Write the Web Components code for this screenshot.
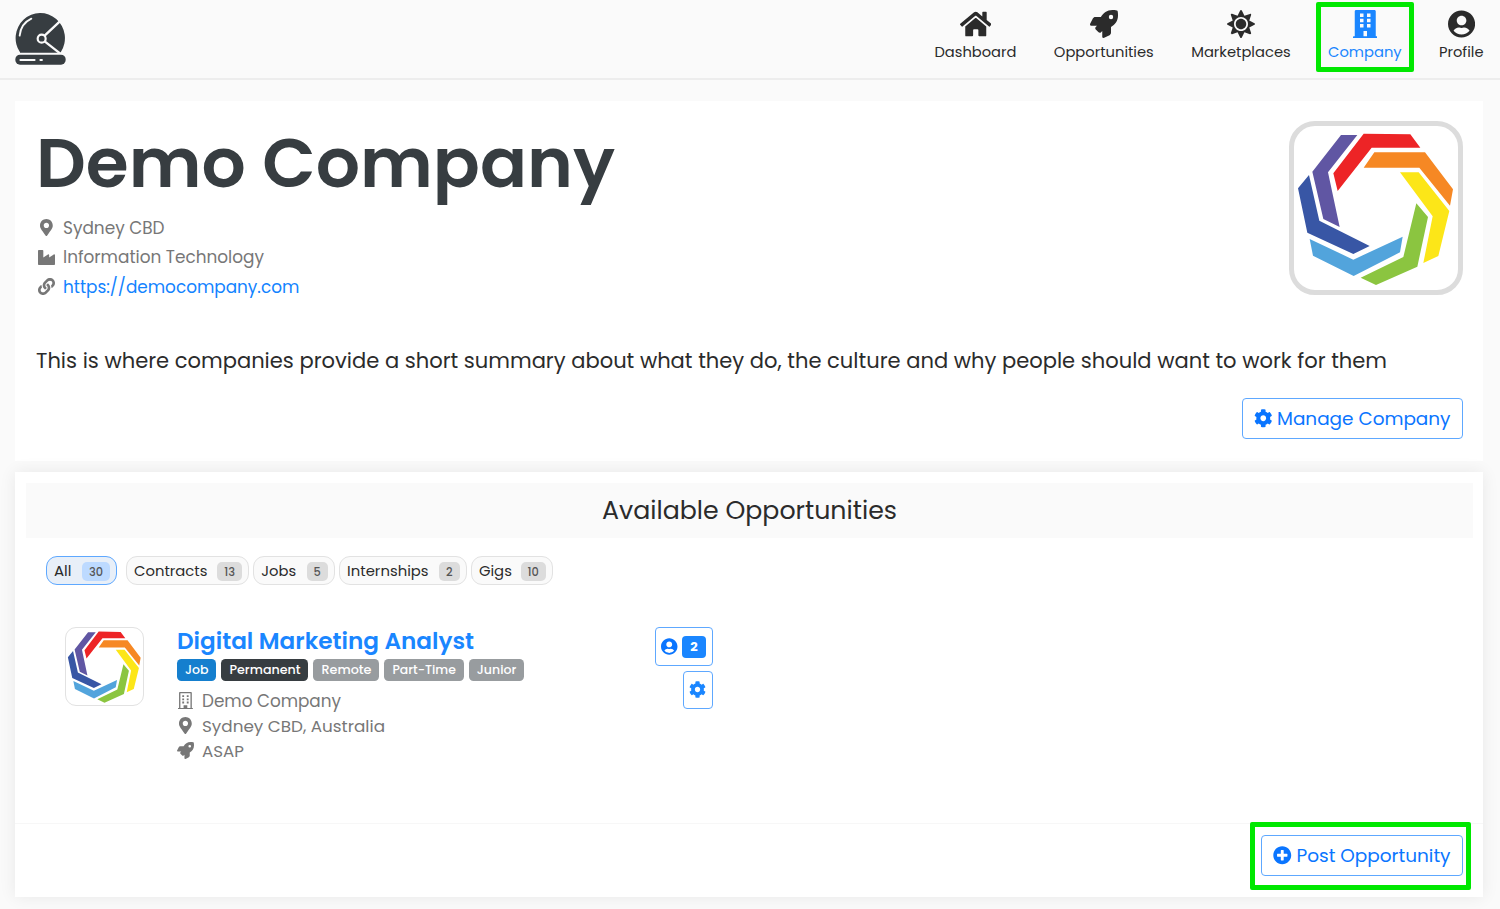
<!DOCTYPE html>
<html lang="en">
<head>
<meta charset="utf-8">
<title>Demo Company</title>
<style>
    body {
        margin: 0;
        height: 909px;
        overflow: hidden;
        background: #fafafa;
        color: #2b2b2b;
        font-family: Poppins, Inter, "Open Sans", sans-serif;
    }
</style>
</head>
<body>
<company-page></company-page>

<script>
const ICONS = {
    home: ["0 0 576 512", "M280.37 148.26L96 300.11V464a16 16 0 0 0 16 16l112.06-.29a16 16 0 0 0 15.92-16V368a16 16 0 0 1 16-16h64a16 16 0 0 1 16 16v95.64a16 16 0 0 0 16 16.05L464 480a16 16 0 0 0 16-16V300L295.67 148.26a12.19 12.19 0 0 0-15.3 0zM571.6 251.47L488 182.56V44.05a12 12 0 0 0-12-12h-56a12 12 0 0 0-12 12v72.61L318.47 43a48 48 0 0 0-61 0L4.34 251.47a12 12 0 0 0-1.6 16.9l25.5 31A12 12 0 0 0 45.15 301l235.22-193.74a12.19 12.19 0 0 1 15.3 0L530.9 301a12 12 0 0 0 16.9-1.6l25.5-31a12 12 0 0 0-1.7-16.93z"],
    rocket: ["0 0 512 512", "M505.12 19.09c-1.19-5.53-6.66-11-12.21-12.18C460.72 0 435.51 0 410.41 0 307.18 0 245.27 55.2 199.05 128H94.84c-16.35 0-35.56 11.87-42.89 26.48L2.52 253.3A28.4 28.4 0 0 0 0 264a24 24 0 0 0 24 24h103.82l-22.48 22.47c-11.36 11.36-13 32.26 0 45.25l50.91 50.9c11.15 11.19 32.15 13.16 45.27 0L224 384.16V488a24 24 0 0 0 24 24 28.56 28.56 0 0 0 10.71-2.52l98.73-49.39c14.63-7.3 26.51-26.5 26.51-42.86V312.8C456.55 266.49 512 204.39 512 101.7c.08-25.2.08-50.4-6.88-82.61ZM384.04 168A40 40 0 1 1 424.05 128 40 40 0 0 1 384.04 168Z"],
    sun: ["0 0 512 512", "M256 160c-52.9 0-96 43.1-96 96s43.1 96 96 96 96-43.1 96-96-43.1-96-96-96zm246.4 80.5l-94.7-47.3 33.5-100.4c4.5-13.6-8.4-26.5-21.9-21.9l-100.4 33.5-47.4-94.8c-6.4-12.8-24.6-12.8-31 0l-47.3 94.7L92.7 70.8c-13.6-4.5-26.5 8.4-21.9 21.9l33.5 100.4-94.7 47.4c-12.8 6.4-12.8 24.6 0 31l94.7 47.3-33.5 100.5c-4.5 13.6 8.4 26.5 21.9 21.9l100.4-33.5 47.3 94.7c6.4 12.8 24.6 12.8 31 0l47.3-94.7 100.4 33.5c13.6 4.5 26.5-8.4 21.9-21.9l-33.5-100.4 94.7-47.3c13-6.5 13-24.7.2-31.1zm-155.9 106c-49.9 49.9-131.1 49.9-181 0-49.9-49.9-49.9-131.1 0-181 49.9-49.9 131.1-49.9 181 0 49.9 49.9 49.9 131.1 0 181z"],
    building: ["0 0 448 512", "M436 480h-20V24c0-13-11-24-24-24H56C43 0 32 11 32 24v456H12c-7 0-12 5-12 12v20h448v-20c0-7-5-12-12-12zM128 64h64v64h-64zM256 64h64v64h-64zM128 160h64v64h-64zM256 160h64v64h-64zM128 256h64v64h-64zM256 256h64v64h-64zM192 384h64v96h-64z"],
    "building-outline": ["0 0 448 512", "M436 480h-20V24c0-13-11-24-24-24H56C43 0 32 11 32 24v456H12c-7 0-12 5-12 12v20h448v-20c0-7-5-12-12-12zM72 40h304v440h-96v-84h-112v84H72zM128 96v56h56V96zM264 96v56h56V96zM128 192v56h56v-56zM264 192v56h56v-56zM128 288v56h56v-56zM264 288v56h56v-56z"],
    user: ["0 0 496 512", "M248 8C111 8 0 119 0 256s111 248 248 248 248-111 248-248S385 8 248 8zm0 96c48.6 0 88 39.4 88 88s-39.4 88-88 88-88-39.4-88-88 39.4-88 88-88zm0 344c-58.7 0-111.3-26.6-146.5-68.2 18.8-35.4 55.6-59.8 98.5-59.8 2.4 0 4.8.4 7.1 1.1 13 4.2 26.6 6.9 40.9 6.9 14.3 0 28-2.7 40.9-6.9 2.3-.7 4.7-1.1 7.1-1.1 42.9 0 79.7 24.4 98.5 59.8C359.3 421.4 306.7 448 248 448z"],
    pin: ["0 0 384 512", "M172.268 501.67C26.97 291.031 0 269.413 0 192 0 85.961 85.961 0 192 0s192 85.961 192 192c0 77.413-26.97 99.031-172.268 309.67-9.535 13.774-29.93 13.773-39.464 0zM192 272c44.183 0 80-35.817 80-80s-35.817-80-80-80-80 35.817-80 80 35.817 80 80 80z"],
    industry: ["0 0 512 512", "M475.115 163.781L336 252.309v-68.28c0-18.916-20.931-30.399-36.885-20.248L160 252.309V56c0-13.255-10.745-24-24-24H24C10.745 32 0 42.745 0 56v400c0 13.255 10.745 24 24 24h464c13.255 0 24-10.745 24-24V184.029c0-18.917-20.931-30.399-36.885-20.248z"],
    link: ["0 0 512 512", "M326.612 185.391c59.747 59.809 58.927 155.698.36 214.59-.11.12-.24.25-.36.37l-67.2 67.2c-59.27 59.27-155.699 59.262-214.96 0-59.27-59.26-59.27-155.7 0-214.96l37.106-37.106c9.84-9.84 26.786-3.3 27.294 10.606.648 17.722 3.826 35.527 9.69 52.721 1.986 5.822.567 12.262-3.783 16.612l-13.087 13.087c-28.026 28.026-28.905 73.66-1.155 101.96 28.024 28.579 74.086 28.749 102.325.51l67.2-67.19c28.191-28.191 28.073-73.757 0-101.83-3.701-3.694-7.429-6.564-10.341-8.569a16.037 16.037 0 0 1-6.947-12.606c-.396-10.567 3.348-21.456 11.698-29.806l21.054-21.055c5.521-5.521 14.182-6.199 20.584-1.731a152.482 152.482 0 0 1 20.522 17.197zM467.547 44.449c-59.261-59.262-155.69-59.27-214.96 0l-67.2 67.2c-.12.12-.25.25-.36.37-58.566 58.892-59.387 154.781.36 214.59a152.454 152.454 0 0 0 20.521 17.196c6.402 4.468 15.064 3.789 20.584-1.731l21.054-21.055c8.35-8.35 12.094-19.239 11.698-29.806a16.037 16.037 0 0 0-6.947-12.606c-2.912-2.005-6.64-4.875-10.341-8.569-28.073-28.073-28.191-73.639 0-101.83l67.2-67.19c28.239-28.239 74.3-28.069 102.325.51 27.75 28.3 26.872 73.934-1.155 101.96l-13.087 13.087c-4.35 4.35-5.769 10.79-3.783 16.612 5.864 17.194 9.042 34.999 9.69 52.721.509 13.906 17.454 20.446 27.294 10.606l37.106-37.106c59.271-59.259 59.271-155.699.001-214.959z"],
    cog: ["0 0 512 512", "M487.4 315.7l-42.6-24.6c4.3-23.2 4.3-47 0-70.2l42.6-24.6c4.9-2.8 7.1-8.6 5.5-14-11.1-35.6-30-67.8-54.7-94.6-3.8-4.1-10-5.1-14.8-2.3L380.8 110c-17.9-15.4-38.5-27.3-60.8-35.1V25.8c0-5.6-3.9-10.5-9.4-11.7-36.7-8.2-74.3-7.8-109.2 0-5.5 1.2-9.4 6.1-9.4 11.7V75c-22.2 7.9-42.8 19.8-60.8 35.1L88.7 85.5c-4.9-2.8-11-1.9-14.8 2.3-24.7 26.7-43.6 58.9-54.7 94.6-1.7 5.4.6 11.2 5.5 14L67.3 221c-4.3 23.2-4.3 47 0 70.2l-42.6 24.6c-4.9 2.8-7.1 8.6-5.5 14 11.1 35.6 30 67.8 54.7 94.6 3.8 4.1 10 5.1 14.8 2.3l42.6-24.6c17.9 15.4 38.5 27.3 60.8 35.1v49.2c0 5.6 3.9 10.5 9.4 11.7 36.7 8.2 74.3 7.8 109.2 0 5.5-1.2 9.4-6.1 9.4-11.7v-49.2c22.2-7.9 42.8-19.8 60.8-35.1l42.6 24.6c4.9 2.8 11 1.9 14.8-2.3 24.7-26.7 43.6-58.9 54.7-94.6 1.5-5.5-.7-11.3-5.6-14.1zM256 336c-44.1 0-80-35.9-80-80s35.9-80 80-80 80 35.9 80 80-35.9 80-80 80z"],
    plus: ["0 0 512 512", "M256 8C119 8 8 119 8 256s111 248 248 248 248-111 248-248S393 8 256 8zm144 276c0 6.6-5.4 12-12 12h-92v92c0 6.6-5.4 12-12 12h-56c-6.6 0-12-5.4-12-12v-92h-92c-6.6 0-12-5.4-12-12v-56c0-6.6 5.4-12 12-12h92v-92c0-6.6 5.4-12 12-12h56c6.6 0 12 5.4 12 12v92h92c6.6 0 12 5.4 12 12v56z"],
};

class AppIcon extends HTMLElement {
    constructor() {
        super();
        this.attachShadow({ mode: "open" });
    }

    connectedCallback() {
        const [viewBox, path] = ICONS[this.getAttribute("name")];
        const size = this.getAttribute("size") || 18;
        this.shadowRoot.innerHTML = `
            <style>
                :host { display: inline-flex; justify-content: center; flex: none; }
                svg { display: block; fill: currentColor; height: ${size}px; }
            </style>
            <svg viewBox="${viewBox}"><path fill-rule="evenodd" d="${path}"/></svg>
        `;
    }
}

// One line of text, sized so that it fills the given measure in pixels
class FitText extends HTMLElement {
    constructor() {
        super();
        this.attachShadow({ mode: "open" }).innerHTML = `
            <style>
                :host { display: inline-block; white-space: nowrap; flex: none; }
            </style>
            <slot></slot>
        `;
    }

    connectedCallback() {
        const measure = Number(this.getAttribute("measure"));
        const count = this.textContent.length;
        if (!measure || count < 2) return;
        const size = parseFloat(getComputedStyle(this).fontSize);
        this.style.fontSize = `${(size * measure) / this.#width}px`;

        // hinting can leave a small remainder, spread it over the letters
        const tracking = (measure - this.#width) / (count - 1);
        this.style.letterSpacing = `${tracking}px`;
        this.style.marginRight = `${-tracking}px`;
    }

    get #width() {
        return this.getBoundingClientRect().width;
    }
}

class HelmetLogo extends HTMLElement {
    constructor() {
        super();
        this.attachShadow({ mode: "open" }).innerHTML = `
            <style>
                :host { display: block; }
                svg { display: block; width: 51px; height: 53px; }
            </style>
            <svg viewBox="45 36 153 159" fill="none" stroke="#fafafa" stroke-linecap="round">
                <path fill="#373d41" stroke="none" d="M60 157A74 75 0 1 1 183 155L180 158H60Z"/>
                <path stroke-width="7" stroke-linecap="butt" d="M134 107L186 58M134 124L180 160"/>
                <circle cx="125" cy="116" r="12" stroke-width="6.5" fill="#373d41"/>
                <path stroke-width="5.5" d="M59 107C61 84 73 66 94 56"/>
                <rect x="46" y="164" width="151" height="30" rx="14" fill="#373d41" stroke="none"/>
                <path stroke-width="5.5" d="M61 180H104M121 180H126"/>
            </svg>
        `;
    }
}

class CompanyLogo extends HTMLElement {
    constructor() {
        super();
        this.attachShadow({ mode: "open" }).innerHTML = `
            <style>
                :host { display: block; box-sizing: border-box; background: #fff; flex: none; }
                svg { display: block; width: 100%; height: 100%; }
            </style>
            <svg viewBox="42 48 492 492">
                <path fill="#6056a3" d="M183 75H232L144 187L179 351L130 327L97 185Z"/>
                <path fill="#ed2426" d="M251 71L391 73L421 113H275L173 243L160 190Z"/>
                <path fill="#f68824" d="M283 127H435L519 238L510 287L418 173H251Z"/>
                <path fill="#fce618" d="M360 187H416L508 303L475 438L430 459L458 319Z"/>
                <path fill="#8bc540" d="M409 280L444 321L412 470L288 525L242 503L370 441Z"/>
                <path fill="#52a4dc" d="M89 387L220 449L368 380L360 427L221 498L99 437Z"/>
                <path fill="#3856a5" d="M87 195L118 332L269 408L220 432L82 368L54 235Z"/>
            </svg>
        `;
    }
}

class NavItem extends HTMLElement {
    constructor() {
        super();
        this.attachShadow({ mode: "open" }).innerHTML = `
            <style>
                :host {
                    display: flex;
                    flex-direction: column;
                    align-items: center;
                    position: relative;
                    font-size: 14.4px;
                    line-height: 22px;
                    gap: 3px;
                }
                :host([active]) { color: #1a86ff; }
                :host([active])::after {
                    content: "";
                    position: absolute;
                    box-sizing: border-box;
                    inset: -8px -12px -9px;
                    border: 5px solid #00e800;
                    border-radius: 2px;
                }
            </style>
            <app-icon size="28" name="${this.getAttribute("icon")}"></app-icon>
            <slot></slot>
        `;
    }
}

class OutlineButton extends HTMLElement {
    constructor() {
        super();
        this.attachShadow({ mode: "open" }).innerHTML = `
            <style>
                :host {
                    display: inline-flex;
                    align-items: center;
                    justify-content: center;
                    box-sizing: border-box;
                    border: 1px solid #5ea8ff;
                    border-radius: 4px;
                    background: #fff;
                    color: #0a75ff;
                    font-size: 18.8px;
                    height: 41px;
                    padding: 0 11px;
                    gap: 5px;
                    cursor: pointer;
                }
            </style>
            <slot></slot>
        `;
    }
}

class FilterChip extends HTMLElement {
    constructor() {
        super();
        this.attachShadow({ mode: "open" }).innerHTML = `
            <style>
                :host {
                    display: flex;
                    align-items: center;
                    justify-content: space-between;
                    box-sizing: border-box;
                    height: 29px;
                    padding: 0 6px 0 7px;
                    border: 1px solid #e2e2e2;
                    border-radius: 11px;
                    background: #fafafa;
                    font-size: 14.3px;
                }
                .count {
                    box-sizing: border-box;
                    height: 19px;
                    padding: 0 7px;
                    margin-top: 1px;
                    border-radius: 5px;
                    background: #dcdcdc;
                    color: #555;
                    font-size: 11.4px;
                    font-weight: 500;
                    line-height: 20px;
                }
                :host([selected]) { background: #e8eff8; border-color: #5ea8ff; }
                :host([selected]) .count { background: #bddaff; }
            </style>
            <slot></slot>
            <span class="count">${this.getAttribute("count")}</span>
        `;
    }
}

class TagBadge extends HTMLElement {
    constructor() {
        super();
        this.attachShadow({ mode: "open" }).innerHTML = `
            <style>
                :host {
                    display: block;
                    padding: 0 8px;
                    height: 22px;
                    border-radius: 4.5px;
                    background: #989c9f;
                    color: #fff;
                    font-size: 12.6px;
                    font-weight: 500;
                    line-height: 21px;
                }
                :host([kind="type"]) { background: #157fce; }
                :host([kind="term"]) { background: #373d41; }
            </style>
            <slot></slot>
        `;
    }
}

class MetaRow extends HTMLElement {
    constructor() {
        super();
        this.attachShadow({ mode: "open" }).innerHTML = `
            <style>
                :host { display: flex; align-items: center; color: #777; }
                app-icon { width: 17px; margin-right: 8px; }
            </style>
            <app-icon name="${this.getAttribute("icon")}" size="17"></app-icon>
            <slot></slot>
        `;
    }
}

class OpportunityCard extends HTMLElement {
    constructor() {
        super();
        this.attachShadow({ mode: "open" }).innerHTML = `
            <style>
                :host { display: flex; width: 648px; }
                company-logo {
                    width: 79px;
                    height: 79px;
                    border: 1px solid #e2e2e2;
                    border-radius: 11px;
                    margin-right: 33px;
                }
                .title {
                    color: #1a86ff;
                    font-size: 22.6px;
                    font-weight: 600;
                    line-height: 28px;
                    height: 32px;
                }
                .tags { display: flex; gap: 5px; margin-bottom: 7px; }
                meta-row { height: 25.2px; font-size: 16.7px; }
                .actions {
                    display: flex;
                    flex-direction: column;
                    align-items: flex-end;
                    gap: 5px;
                    margin-left: auto;
                }
                outline-button { height: 39px; padding: 0 6px 0 5px; gap: 4.5px; }
                outline-button.cog { width: 30px; height: 38px; padding: 0 6px 1px 5px; color: #1a86ff; }
                .count {
                    width: 24px;
                    height: 22px;
                    border-radius: 4px;
                    background: #1a86ff;
                    color: #fff;
                    font-size: 13px;
                    font-weight: 700;
                    line-height: 22px;
                    text-align: center;
                }
            </style>
            <company-logo></company-logo>
            <div>
                <div class="title"><fit-text measure="297">Digital Marketing Analyst</fit-text></div>
                <div class="tags">
                    <tag-badge kind="type"><fit-text measure="23.5">Job</fit-text></tag-badge>
                    <tag-badge kind="term"><fit-text measure="71">Permanent</fit-text></tag-badge>
                    <tag-badge><fit-text measure="50">Remote</fit-text></tag-badge>
                    <tag-badge><fit-text measure="63.3">Part-Time</fit-text></tag-badge>
                    <tag-badge><fit-text measure="39.5">Junior</fit-text></tag-badge>
                </div>
                <meta-row icon="building-outline"><fit-text measure="139">Demo Company</fit-text></meta-row>
                <meta-row icon="pin"><fit-text measure="183">Sydney CBD, Australia</fit-text></meta-row>
                <meta-row icon="rocket"><fit-text measure="42">ASAP</fit-text></meta-row>
            </div>
            <div class="actions">
                <outline-button><app-icon name="user" size="17"></app-icon><span class="count">2</span></outline-button>
                <outline-button class="cog"><app-icon name="cog" size="17"></app-icon></outline-button>
            </div>
        `;
    }
}

class CompanyPage extends HTMLElement {
    constructor() {
        super();
        this.attachShadow({ mode: "open" }).innerHTML = `
            <style>
                :host { display: block; }
                header {
                    display: flex;
                    align-items: flex-start;
                    justify-content: space-between;
                    box-sizing: border-box;
                    height: 80px;
                    padding: 10px 16.5px 0 15px;
                    border-bottom: 2px solid #ededed;
                }
                helmet-logo { margin-top: 2px; }
                nav { display: flex; gap: 37.4px; }
                main { padding: 21px 17px 0 15px; }
                section { box-sizing: border-box; background: #fff; }
                .profile {
                    height: 360px;
                    padding: 20px 20.5px 22px 21px;
                    display: flex;
                    flex-direction: column;
                }
                .intro { display: flex; justify-content: space-between; height: 180px; }
                h1, h2, p { margin: 0; font-weight: 400; }
                h1 {
                    color: #373d41;
                    font-size: 69px;
                    font-weight: 600;
                    line-height: 84px;
                    height: 84px;
                    margin-bottom: 8px;
                }
                .profile meta-row { height: 29.5px; margin-left: 2px; font-size: 17.3px; }
                .profile .url { color: #1283ff; }
                .intro company-logo {
                    width: 174px;
                    height: 174px;
                    border: 5px solid #dcdcdc;
                    border-radius: 26px;
                }
                .summary { font-size: 21.4px; line-height: 32px; height: 32px; margin: 44px 0 auto; }
                .profile outline-button { align-self: flex-end; }
                .listing {
                    height: 425px;
                    margin-top: 11px;
                    padding: 11px 10px 0 11px;
                    box-shadow: 0 0 16px rgba(0, 0, 0, .075);
                    display: flex;
                    flex-direction: column;
                }
                h2 {
                    background: #fafafa;
                    font-size: 25px;
                    line-height: 55px;
                    height: 55px;
                    text-align: center;
                }
                .filters { display: flex; gap: 4.3px; margin: 18px 20px 42px; }
                .filters filter-chip:first-child { margin-right: 4.7px; }
                opportunity-card { margin-left: 39px; }
                footer {
                    display: flex;
                    justify-content: flex-end;
                    border-top: 1px solid #f7f7f7;
                    padding: 11px 10px 21px;
                    margin: auto -10px 0 -11px;
                }
                .highlight { position: relative; margin-right: 10.5px; height: 41px; }
                .highlight::after {
                    content: "";
                    position: absolute;
                    box-sizing: border-box;
                    inset: -13px -8.5px -14px -11px;
                    border: 5px solid #00e800;
                    border-radius: 2px;
                }
            </style>
            <header>
                <helmet-logo></helmet-logo>
                <nav>
                    <nav-item icon="home"><fit-text measure="82">Dashboard</fit-text></nav-item>
                    <nav-item icon="rocket"><fit-text measure="100">Opportunities</fit-text></nav-item>
                    <nav-item icon="sun"><fit-text measure="99.5">Marketplaces</fit-text></nav-item>
                    <nav-item icon="building" active><fit-text measure="73.5">Company</fit-text></nav-item>
                    <nav-item icon="user"><fit-text measure="44.5">Profile</fit-text></nav-item>
                </nav>
            </header>
            <main>
                <section class="profile">
                    <div class="intro">
                        <div>
                            <h1><fit-text measure="579">Demo Company</fit-text></h1>
                            <meta-row icon="pin"><fit-text measure="101.5">Sydney CBD</fit-text></meta-row>
                            <meta-row icon="industry"><fit-text measure="201">Information Technology</fit-text></meta-row>
                            <meta-row icon="link"><fit-text class="url" measure="236.3">https://democompany.com</fit-text></meta-row>
                        </div>
                        <company-logo></company-logo>
                    </div>
                    <p class="summary"><fit-text measure="1351">This is where companies provide a short summary about what they do, the culture and why people should want to work for them</fit-text></p>
                    <outline-button><app-icon name="cog" size="18.5"></app-icon><fit-text measure="173.5">Manage Company</fit-text></outline-button>
                </section>
                <section class="listing">
                    <h2><fit-text measure="295">Available Opportunities</fit-text></h2>
                    <div class="filters">
                        <filter-chip style="width: 71px" count="30" selected><fit-text measure="17.5">All</fit-text></filter-chip>
                        <filter-chip style="width: 123px" count="13"><fit-text measure="73.5">Contracts</fit-text></filter-chip>
                        <filter-chip style="width: 81.5px" count="5"><fit-text measure="35">Jobs</fit-text></filter-chip>
                        <filter-chip style="width: 127.5px" count="2"><fit-text measure="81.5">Internships</fit-text></filter-chip>
                        <filter-chip style="width: 82px" count="10"><fit-text measure="33">Gigs</fit-text></filter-chip>
                    </div>
                    <opportunity-card></opportunity-card>
                    <footer>
                        <div class="highlight">
                            <outline-button><app-icon name="plus" size="18.5"></app-icon><fit-text measure="154">Post Opportunity</fit-text></outline-button>
                        </div>
                    </footer>
                </section>
            </main>
        `;
    }
}

customElements.define("company-page", CompanyPage);
customElements.define("opportunity-card", OpportunityCard);
customElements.define("nav-item", NavItem);
customElements.define("outline-button", OutlineButton);
customElements.define("filter-chip", FilterChip);
customElements.define("tag-badge", TagBadge);
customElements.define("meta-row", MetaRow);
customElements.define("company-logo", CompanyLogo);
customElements.define("helmet-logo", HelmetLogo);
customElements.define("app-icon", AppIcon);
// last, once everything around the text has its final font size
customElements.define("fit-text", FitText);
</script>
</body>
</html>
